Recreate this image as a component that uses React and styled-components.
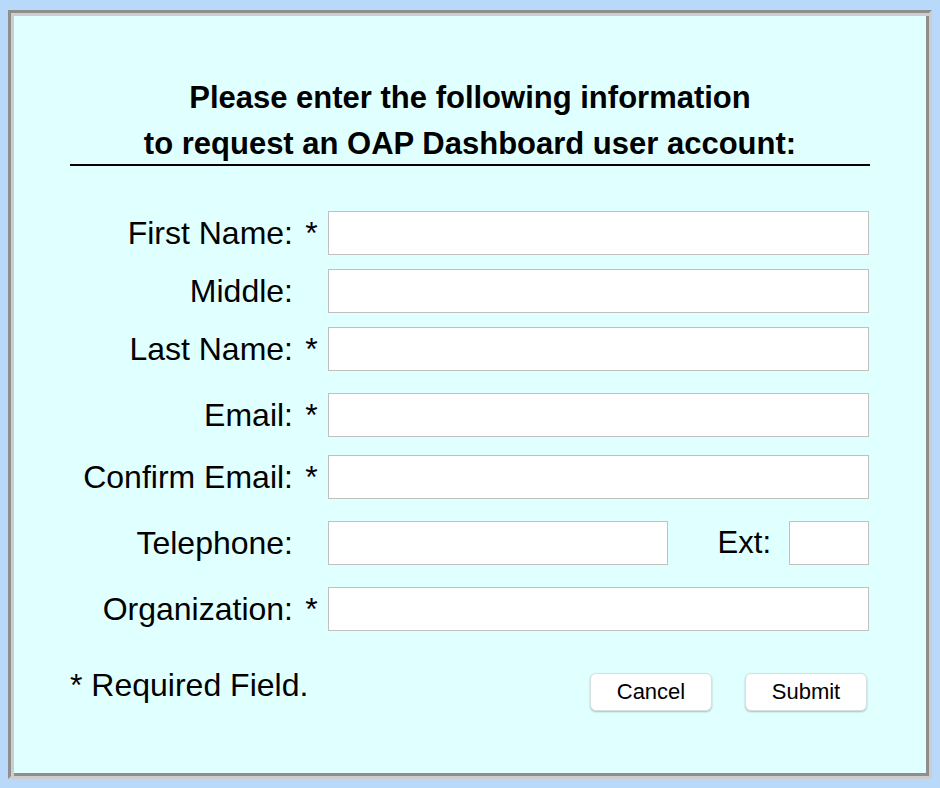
import React from "react";
import styled, { createGlobalStyle } from "styled-components";

const GlobalStyle = createGlobalStyle`
  html, body {
    margin: 0;
    padding: 0;
    background: #b9d9fb;
  }
  body {
    font-family: "Liberation Sans", Arial, sans-serif;
    color: #000;
  }
  * { box-sizing: border-box; }
`;

const Page = styled.div`
  padding: 10px 8px 9px 8px;
  width: 940px;
  height: 788px;
`;

const Panel = styled.div`
  width: 924px;
  height: 769px;
  background: #e0ffff;
  border: 3px solid;
  border-color: #8e8e8e #cdcdcd #cdcdcd #8e8e8e;
  box-shadow: inset 3px 3px 0 0 #cdcdcd, inset -3px -3px 0 0 #8e8e8e;
  padding: 59px 59px 0 59px;
`;

const Title = styled.h1`
  margin: 0;
  height: 94px;
  padding-top: 3px;
  font-size: 31px;
  font-weight: bold;
  line-height: 46px;
  text-align: center;
  border-bottom: 2px solid #000;
`;

const Form = styled.form`
  margin-top: 45px;
  display: flex;
  flex-direction: column;
`;

const Row = styled.div`
  display: grid;
  grid-template-columns: 223px 35px 541px;
  align-items: center;
  height: 44px;
  margin-top: ${(p) => p.$gap}px;
`;

const Label = styled.label`
  font-size: 32px;
  text-align: right;
  white-space: nowrap;
`;

const Star = styled.span`
  font-size: 32px;
  text-align: center;
  padding-left: 2px;
  align-self: center;
`;

const Input = styled.input`
  display: block;
  width: ${(p) => (p.$w ? `${p.$w}px` : "100%")};
  height: 44px;
  margin: 0;
  border: 1px solid #c0c0c0;
  background: #fff;
  font-family: "Liberation Sans", Arial, sans-serif;
  font-size: 20px;
  padding: 0 6px;
  outline: none;
`;

const PhoneCell = styled.div`
  display: flex;
  align-items: center;
  justify-content: space-between;
`;

const ExtGroup = styled.div`
  display: flex;
  align-items: center;
  gap: 18px;
`;

const ExtLabel = styled.label`
  font-size: 31px;
`;

const Footer = styled.div`
  margin-top: 35px;
  display: flex;
  justify-content: space-between;
  align-items: flex-start;
  padding-right: 3px;
`;

const Note = styled.div`
  font-size: 32px;
  margin-top: 1px;
`;

const Buttons = styled.div`
  display: flex;
  gap: 33px;
  margin-top: 7px;
`;

const Button = styled.button`
  width: 122px;
  height: 38px;
  background: #fff;
  border: 1px solid #d6e0e0;
  border-radius: 6px;
  box-shadow: 0 1px 2px rgba(0, 0, 0, 0.25);
  font-family: "Liberation Sans", Arial, sans-serif;
  font-size: 22px;
  color: #000;
  padding: 0;
  cursor: pointer;
`;

const fields = [
  { label: "First Name:", req: true, gap: 0 },
  { label: "Middle:", req: false, gap: 14 },
  { label: "Last Name:", req: true, gap: 14 },
  { label: "Email:", req: true, gap: 22 },
  { label: "Confirm Email:", req: true, gap: 18 },
];

export default function App() {
  return (
    <>
      <GlobalStyle />
      <Page>
        <Panel>
          <Title>
            Please enter the following information
            <br />
            to request an OAP Dashboard user account:
          </Title>
          <Form onSubmit={(e) => e.preventDefault()}>
            {fields.map((f) => (
              <Row key={f.label} $gap={f.gap}>
                <Label>{f.label}</Label>
                <Star>{f.req ? "*" : ""}</Star>
                <Input type="text" />
              </Row>
            ))}
            <Row $gap={22}>
              <Label>Telephone:</Label>
              <Star />
              <PhoneCell>
                <Input type="text" $w={340} />
                <ExtGroup>
                  <ExtLabel>Ext:</ExtLabel>
                  <Input type="text" $w={80} />
                </ExtGroup>
              </PhoneCell>
            </Row>
            <Row $gap={22}>
              <Label>Organization:</Label>
              <Star>*</Star>
              <Input type="text" />
            </Row>
            <Footer>
              <Note>* Required Field.</Note>
              <Buttons>
                <Button type="button">Cancel</Button>
                <Button type="submit">Submit</Button>
              </Buttons>
            </Footer>
          </Form>
        </Panel>
      </Page>
    </>
  );
}
